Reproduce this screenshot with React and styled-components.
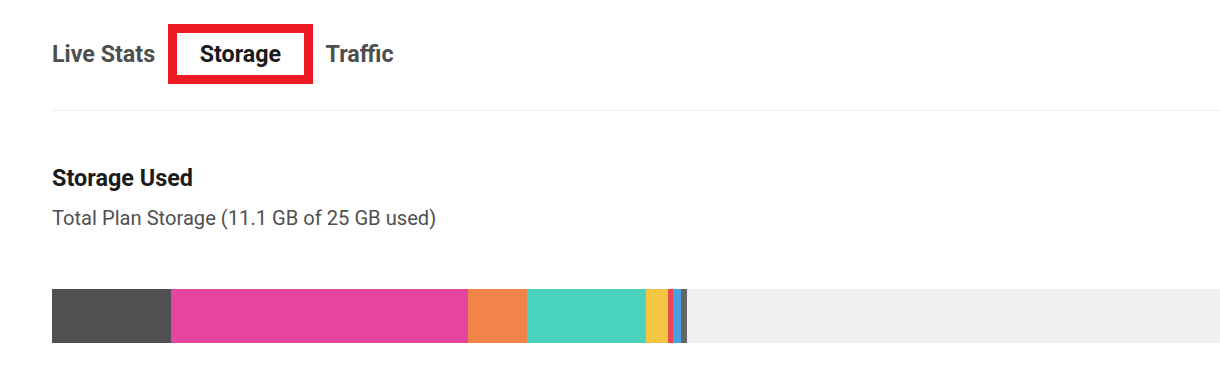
import React from 'react';
import styled, { createGlobalStyle } from 'styled-components';

const GlobalStyle = createGlobalStyle`
  body {
    margin: 0;
    background: #fff;
    font-family: Roboto, "Liberation Sans", Arial, sans-serif;
  }
`;

const SEGMENTS = [
  { name: 'Documents', color: '#505050', width: 118.5 },
  { name: 'Photos', color: '#e5459f', width: 297.5 },
  { name: 'Video', color: '#f4834a', width: 59 },
  { name: 'Audio', color: '#4ad4be', width: 119 },
  { name: 'Archives', color: '#f3c543', width: 22 },
  { name: 'Mail', color: '#ea4a4f', width: 4.5 },
  { name: 'Apps', color: '#4a9fe0', width: 8 },
  { name: 'Other', color: '#646464', width: 6 },
];

const Page = styled.main`
  padding-left: 52px;
`;

const Tabs = styled.nav`
  display: flex;
  align-items: center;
  gap: 13px;
  padding: 24px 0 26px;
  border-bottom: 1px solid #efefef;
`;

const Tab = styled.button`
  font-family: inherit;
  font-size: 23.25px;
  font-weight: 700;
  color: ${({ $active }) => ($active ? '#1a1a1a' : '#4e4e4e')};
  background: none;
  height: 60px;
  padding: ${({ $active }) => ($active ? '0 22.5px' : '0')};
  border: ${({ $active }) => ($active ? '9.5px solid #ed1c24' : '0')};
  cursor: pointer;
`;

const Section = styled.section`
  padding-top: 53px;
`;

const Title = styled.h2`
  margin: 0;
  font-size: 23.4px;
  line-height: 28px;
  font-weight: 700;
  color: #1b1b1b;
`;

const Subtitle = styled.p`
  margin: 14px 0 0;
  font-size: 20.15px;
  line-height: 24px;
  color: #505050;
`;

const Bar = styled.div`
  display: flex;
  height: 54px;
  margin-top: 59px;
  background: #f0f0f0;
`;

const Segment = styled.div`
  flex: none;
  background: ${({ $color }) => $color};
`;

export default function App() {
  return (
    <>
      <GlobalStyle />
      <Page>
        <Tabs>
          <Tab>Live Stats</Tab>
          <Tab $active>Storage</Tab>
          <Tab>Traffic</Tab>
        </Tabs>
        <Section>
          <Title>Storage Used</Title>
          <Subtitle>Total Plan Storage (11.1 GB of 25 GB used)</Subtitle>
          <Bar>
            {SEGMENTS.map(s => (
              <Segment
                key={s.name}
                title={s.name}
                $color={s.color}
                style={{ width: s.width }}
              />
            ))}
          </Bar>
        </Section>
      </Page>
    </>
  );
}
